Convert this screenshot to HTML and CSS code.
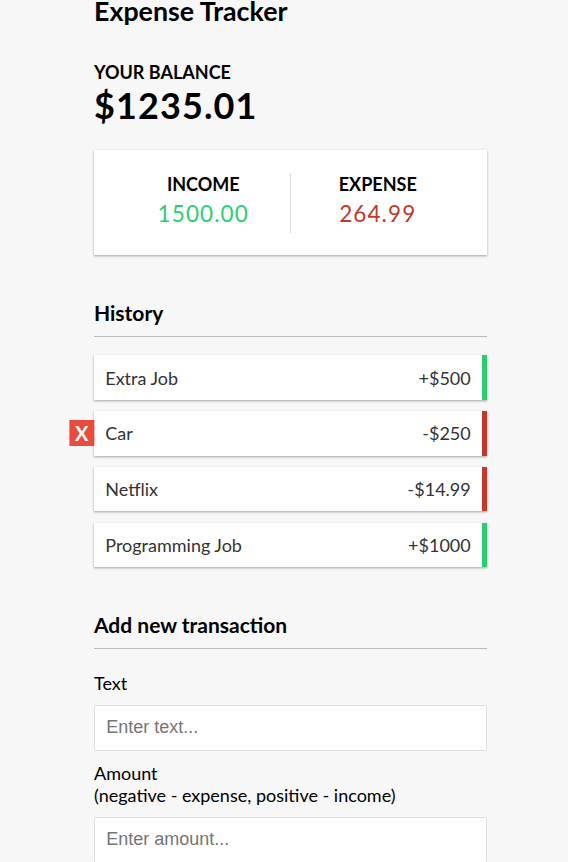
FILE: index.html
```html
<!DOCTYPE html>
<html lang="en">
<head>
<meta charset="UTF-8">
<title>Expense Tracker</title>
<link rel="stylesheet" href="styles.css">
</head>
<body>
  <h2 class="title">Expense Tracker</h2>
  <div class="container">
    <h4 class="label-upper">Your Balance</h4>
    <h1 class="balance">$1235.01</h1>

    <div class="inc-exp-container">
      <div class="inc-col">
        <h4 class="label-upper">Income</h4>
        <p class="money plus">1500.00</p>
      </div>
      <div class="inc-col">
        <h4 class="label-upper">Expense</h4>
        <p class="money minus">264.99</p>
      </div>
    </div>

    <h3 class="section-title">History</h3>
    <ul class="list">
      <li class="item plus">Extra Job <span>+$500</span></li>
      <li class="item minus">Car <span>-$250</span><button class="delete-btn">x</button></li>
      <li class="item minus">Netflix <span>-$14.99</span></li>
      <li class="item plus">Programming Job <span>+$1000</span></li>
    </ul>

    <h3 class="section-title">Add new transaction</h3>
    <form class="form">
      <div class="form-control">
        <label class="field-label" for="text">Text</label>
        <input class="field-input" type="text" id="text" placeholder="Enter text...">
      </div>
      <div class="form-control">
        <label class="field-label" for="amount">Amount <br>(negative - expense, positive - income)</label>
        <input class="field-input" type="number" id="amount" placeholder="Enter amount...">
      </div>
    </form>
  </div>
</body>
</html>
```
FILE: styles.css
```css
* {
  box-sizing: border-box;
}

body {
  margin: 0;
  background-color: #f7f7f7;
  font-family: Lato, "Open Sans", sans-serif;
  font-size: 18px;
  color: #000;
  padding-left: 94px;
}

.title {
  width: 393px;
  margin: -5px 0 0;
  font-size: 26.8px;
  font-weight: 700;
}

.container {
  width: 393px;
  padding-top: 34px;
}

.label-upper {
  margin: 0;
  font-size: 18px;
  font-weight: 700;
  text-transform: uppercase;
}

.balance {
  margin: 0;
  font-size: 36px;
  font-weight: 700;
  letter-spacing: 1.1px;
}

.inc-exp-container {
  background-color: #fff;
  box-shadow: 0 1px 3px rgba(0, 0, 0, 0.12), 0 1px 2px rgba(0, 0, 0, 0.24);
  padding: 22.5px;
  display: flex;
  justify-content: space-between;
  margin: 23px 0;
}

.inc-col {
  flex: 1;
  text-align: center;
}

.inc-col:first-of-type {
  border-right: 1px solid #dedede;
}

.money {
  font-size: 22.5px;
  letter-spacing: 1.1px;
  margin: 5.6px 0;
}

.money.plus {
  color: #2ecc71;
}

.money.minus {
  color: #c0392b;
}

.section-title {
  border-bottom: 1px solid #bbb;
  padding-bottom: 11.25px;
  margin: 45px 0 11.25px;
  font-size: 21px;
  font-weight: 700;
}

.list {
  list-style-type: none;
  padding: 0;
  margin: 18px 0 45px;
}

.item {
  background-color: #fff;
  box-shadow: 0 1px 3px rgba(0, 0, 0, 0.12), 0 1px 2px rgba(0, 0, 0, 0.24);
  color: #333;
  display: flex;
  justify-content: space-between;
  position: relative;
  padding: 11.25px;
  margin: 11.25px 0;
  line-height: 22px;
}

.item.plus {
  border-right: 5.6px solid #2ecc71;
}

.item.minus {
  border-right: 5.6px solid #c0392b;
}

.delete-btn {
  background-color: #e74c3c;
  border: 0;
  color: #fff;
  font-family: Lato, sans-serif;
  font-weight: 700;
  text-transform: uppercase;
  font-size: 20px;
  line-height: 22px;
  padding: 2px 5.6px;
  position: absolute;
  top: 50%;
  left: 0;
  transform: translate(-100%, -50%);
}

.form-control .field-label {
  display: inline-block;
  margin: 11.25px 0;
}

.field-input {
  border: 1px solid #dedede;
  border-radius: 2px;
  display: block;
  font-family: "Liberation Sans", Arial, sans-serif;
  font-size: 18px;
  padding: 11.25px;
  width: 100%;
  background: #fff;
  color: #333;
}

.field-input::placeholder {
  color: #757575;
}
```
